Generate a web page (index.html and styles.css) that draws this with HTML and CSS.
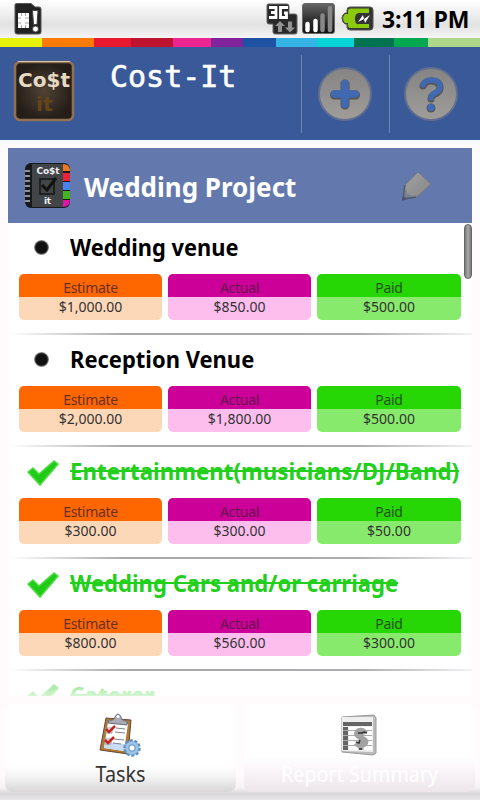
FILE: index.html
```html
<!DOCTYPE html>
<html lang="en">
<head>
<meta charset="utf-8">
<title>Cost-It</title>
<link rel="stylesheet" href="styles.css">
</head>
<body>
<div class="screen">
  <div class="status">
    <svg class="sim" width="28" height="34" viewBox="0 0 28 34"><path d="M2.500 .5H17L21 4h4q2 0 2 2v23q0 2-2 2H3q-2 0-2-2V2q0-1.500 1.500-1.500z" fill="#222" stroke="#555"/><path d="M4 10h11v15H4z" fill="#fff"/><path d="M4 15h3m4 0h4M4 20h3m4 0h4M7.500 10v3m4-3v3m-4 9v3m4-3v3" stroke="#aaa" fill="none"/><path d="M18.500 7.500h5.500l-1 14h-3.500z" fill="#fff" stroke="#444"/><circle cx="21.500" cy="26" r="3" fill="#fff" stroke="#444"/></svg>
    <svg width="33" height="33" viewBox="0 0 33 33"><path d="M2 1h19q2 0 2 2v8h6q2 0 2 2v16q0 2-2 2H9q-2 0-2-2v-8H3q-2 0-2-2V3q0-2 1-2z" fill="#292929" stroke="#666"/><path d="M3 4.500h7v10H3m2-5h5M22 4.500h-7.500v10h6v-4.500H18" fill="none" stroke="#fff" stroke-width="2.800"/><path d="M14 18l5 5h-3v6h-4v-6H9zM24 29.500l-5-5h3v-6h4v6h3z" fill="#929292"/></svg>
    <svg class="signal" width="34" height="33" viewBox="0 0 34 33"><defs><linearGradient id="sg" x2="0" y2="1"><stop stop-color="#666"/><stop offset=".5" stop-color="#333"/><stop offset="1" stop-color="#111"/></linearGradient></defs><rect x=".5" y=".5" width="32" height="30" rx="2.500" fill="url(#sg)" stroke="#666"/><path d="M5.500 27v-6m8 6v-9" stroke="#fff" stroke-width="4.500" stroke-linecap="round"/><path d="M20.500 27V12.500m7.500 14.500V5" stroke="#888" stroke-width="4.500" stroke-linecap="round"/></svg>
    <svg class="battery" width="33" height="26" viewBox="0 0 33 26"><path d="M9 1h20q3 0 3 3v17q0 3-3 3H9q-3 0-3-3v-3H4q-3-2-3-6 0-3 3-5h2V4q0-3 3-3z" fill="#333" stroke="#555"/><path d="M9 2.500h19V7H18q-4 0-4 6t4 5h10v4H9q-2 0-2-3v-2H4q-2-2-2-5 0-2 2-4h3V5q0-2.500 2-2.500z" fill="#8bc90d"/><path d="M17 16l5-7 1 4 6-4-5 8-1-4z" fill="#fff"/></svg>
    <span class="clock">3:11 PM</span>
  </div>
  <div class="stripe"></div>
  <header class="appbar">
    <svg class="logo" width="62" height="62" viewBox="0 0 62 62"><defs><radialGradient id="lg"><stop stop-color="#514335"/><stop offset="1" stop-color="#241d18"/></radialGradient></defs><rect x="2" y="2" width="58" height="58" rx="5" fill="url(#lg)" stroke="#917152" stroke-width="2.600"/><path d="M5 1.500h52" stroke="#cfc0ae"/><text x="5" y="27" textLength="52" lengthAdjust="spacingAndGlyphs" class="logo-a">Co$t</text><text x="23" y="51" textLength="17" lengthAdjust="spacingAndGlyphs" class="logo-b">it</text></svg>
    <h1>Cost-It</h1>
    <div class="action"><svg width="60" height="60" viewBox="0 0 60 60"><defs><linearGradient id="cg" x2="0" y2="1"><stop stop-color="#858483"/><stop offset="1" stop-color="#a09d99"/></linearGradient></defs><circle cx="30" cy="30" r="26" fill="url(#cg)" stroke="#626f90" stroke-width="2"/><path d="M30 20v21M19.500 31h21" stroke="#555" stroke-width="9" stroke-linecap="round"/><path d="M30 19.500v21M19.500 30h21" stroke="#4169b1" stroke-width="7.500" stroke-linecap="round"/></svg></div>
    <div class="action"><svg width="60" height="60" viewBox="0 0 60 60"><circle cx="30" cy="30" r="26" fill="url(#cg)" stroke="#626f90" stroke-width="2"/><g fill="none" stroke-linecap="round"><path d="M22 22q2-5 8-5 9 0 9 7 0 4-5 6-4 2-4 5" stroke="#555" stroke-width="7"/><path d="M22 21q2-5 8-5 9 0 9 7 0 4-5 6-4 2-4 5" stroke="#4169b1" stroke-width="5.500"/></g><circle cx="30" cy="44" r="4.500" fill="#555"/><circle cx="30" cy="43.500" r="3.700" fill="#4169b1"/></svg></div>
  </header>
  <main>
    <section class="project">
      <svg class="book" width="48" height="46" viewBox="0 0 48 46"><rect x="1" width="45" height="45" rx="6" fill="#17191b"/><path d="M39 1q7 0 7 7H39z" fill="#ee7822"/><path d="M39 10h7v8h-7z" fill="#eb2239"/><path d="M39 19h7v8h-7z" fill="#4a83ed"/><path d="M39 28h7v8h-7z" fill="#46b421"/><path d="M39 37h7q0 7-7 7z" fill="#dc16a5"/><path d="M8 1h31v43H8z" fill="#414547"/><path d="M1 8h5M1 13h5M1 18h5M1 23h5M1 28h5M1 33h5M1 38h5" stroke="#b6babd" stroke-width="1.300"/><path d="M16 16h14v15H16z" fill="none" stroke="#141414" stroke-width="1.500"/><path d="M18 22l5 5 9-12" stroke="#111" stroke-width="3" fill="none"/><text x="12.500" y="11" textLength="23" class="book-t">Co$t</text><text x="20" y="41" textLength="7" class="book-t">it</text></svg>
      <h2>Wedding Project</h2>
      <svg class="pencil" width="32" height="32" viewBox="0 0 32 32"><defs><linearGradient id="pg" x2="1" y2="1"><stop stop-color="#a3a3a3"/><stop offset="1" stop-color="#858585"/></linearGradient></defs><path d="M5 15L18 2 31 14 17 27 6 28 3 26z" fill="url(#pg)" stroke="#717783"/><path d="M6 18l1 6 7 2-8 2-2-2z" fill="#748098"/><path d="M5 15L3 29l13-2" stroke="#535b6b" fill="none" stroke-width="1.500"/><path d="M2 31l1-5 4 3z" fill="#4c5362"/></svg>
    </section>
    <div class="list">
      <article class="row"><div class="name"><i class="dot"></i><span class="t1">Wedding venue</span></div><div class="cells"><div class="cell est"><b>Estimate</b><span>$1,000.00</span></div><div class="cell act"><b>Actual</b><span>$850.00</span></div><div class="cell paid"><b>Paid</b><span>$500.00</span></div></div></article>
      <article class="row"><div class="name"><i class="dot"></i><span class="t2">Reception Venue</span></div><div class="cells"><div class="cell est"><b>Estimate</b><span>$2,000.00</span></div><div class="cell act"><b>Actual</b><span>$1,800.00</span></div><div class="cell paid"><b>Paid</b><span>$500.00</span></div></div></article>
      <article class="row done"><div class="name"><svg class="tick" width="34" height="30" viewBox="0 0 34 30"><path d="M2 14l5-4 6 6L28 3l4 3-18 21z" fill="#20cb16" stroke="#4fdb48" stroke-width="1.500"/></svg><span class="t3">Entertainment(musicians/DJ/Band)</span></div><div class="cells"><div class="cell est"><b>Estimate</b><span>$300.00</span></div><div class="cell act"><b>Actual</b><span>$300.00</span></div><div class="cell paid"><b>Paid</b><span>$50.00</span></div></div></article>
      <article class="row done"><div class="name"><svg class="tick" width="34" height="30" viewBox="0 0 34 30"><path d="M2 14l5-4 6 6L28 3l4 3-18 21z" fill="#20cb16" stroke="#4fdb48" stroke-width="1.500"/></svg><span class="t4">Wedding Cars and/or carriage</span></div><div class="cells"><div class="cell est"><b>Estimate</b><span>$800.00</span></div><div class="cell act"><b>Actual</b><span>$560.00</span></div><div class="cell paid"><b>Paid</b><span>$300.00</span></div></div></article>
      <article class="row done last"><div class="name"><svg class="tick" width="34" height="30" viewBox="0 0 34 30"><path d="M2 14l5-4 6 6L28 3l4 3-18 21z" fill="#20cb16" stroke="#4fdb48" stroke-width="1.500"/></svg><span class="t5">Caterer</span></div></article>
      <div class="fade"></div>
      <div class="scroll"></div>
    </div>
  </main>
  <nav>
    <div class="tab on">
      <svg width="44" height="44" viewBox="0 0 44 44"><path d="M8 5l25 2-3 34L2 37z" fill="#af7836" stroke="#674a35"/><path d="M10 9l20 2-4 27-20-3z" fill="#fff"/><path d="M8 29l20 2-2 7-20-3z" fill="#c9dcf5"/><path d="M11 7q5 1 6-3 3-6 6 0 0 4 6 4v4L10 10z" fill="#a9abb6" stroke="#6c6e79"/><circle cx="20" cy="3.500" r="1.500" fill="#fff"/><path d="M18 15l9 1m-10 3l10 1M16 26l10 1m-11 3l8 1" stroke="#7d8590"/><path d="M8 15h6v5H8zM7 26h6v5H7z" fill="#fff" stroke="#999"/><path d="M8 16l3 3 6-6M7 27l3 3 6-6" stroke="#c52322" stroke-width="2.500" fill="none"/><circle cx="34" cy="35" r="7.500" fill="#8fb9e3" stroke="#5d8fc2" stroke-width="2.500" stroke-dasharray="3 1.700"/><circle cx="34" cy="35" r="6.500" fill="#9bc3ea"/><circle cx="34" cy="35" r="3.200" fill="#fff" stroke="#5b88b7"/></svg>
      <span>Tasks</span>
    </div>
    <div class="tab off">
      <svg width="44" height="44" viewBox="0 0 44 44"><path d="M5 4l32-2 2 3v35l-3 2-31-3z" fill="#bbb" stroke="#999"/><path d="M5 4h31v35l-31-1z" fill="#eee"/><path d="M6 9h29v4H6zM6 14h5v23H6z" fill="#656565"/><path d="M12 14h23v23H12z" fill="#fff"/><path d="M6 17.500h29m-29 5h29m-29 5h29m-29 5h29" stroke="#aaa"/><path d="M29 20q-4-4-8-2-4 4 3 7 7 2 4 6-5 4-9-1M24 15v22" fill="none" stroke="#a2a2a2" stroke-width="5"/><path d="M21 20h4l2-1 3 1M19 29l3 1 1-3m-1 9h3" fill="none" stroke="#333" stroke-width="1.500"/></svg>
      <span>Report Summary</span>
    </div>
  </nav>
</div>
</body>
</html>
```
FILE: styles.css
```css
* { box-sizing: border-box; }
body { margin: 0; font-family: "Noto Sans", "Open Sans", sans-serif; }
.screen { width: 480px; height: 800px; overflow: hidden; background: #fffafc; display: flex; flex-direction: column; }
.status { height: 38px; flex: none; display: flex; align-items: flex-start; padding: 2px 0 0 14px; background: linear-gradient(#fff, #e3e2e3 65%, #f4f4f4); }
.status svg { flex: none; margin-top: 1px; }
.status .sim { margin-right: 224px; }
.status .signal { margin-left: 3px; }
.status .battery { margin: 4px 0 0 5px; }
.clock { margin-left: 8px; font: bold 23px/35px "Open Sans", sans-serif; letter-spacing: -0.1px; white-space: nowrap; }
.stripe { height: 9px; flex: none; background: linear-gradient(90deg, #e8f10b 42px, #f97b08 42px 94px, #e91831 94px 131px, #bf1430 131px 173px, #ed2593 173px 211px, #81239b 211px 243px, #1d51a1 243px 276px, #35b5e5 276px 317px, #08d3d6 317px 354px, #007450 354px 394px, #04a850 394px 428px, #add88b 428px); }
.appbar { height: 93px; flex: none; display: flex; padding-left: 13px; background: #3a5999; }
.logo { margin-top: 13px; }
.logo-a { font: bold 20px "DejaVu Sans", sans-serif; fill: #e6dac4; }
.logo-b { font: bold 20px "DejaVu Sans", sans-serif; fill: #634519; }
h1 { margin: 10px 0 0 35px; width: 191px; color: #fff; font: 30px/40px "DejaVu Sans Mono", monospace; -webkit-text-stroke: 0.6px #fff; }
.action { width: 88px; height: 78px; margin-top: 8px; border-left: 1px solid #6d84b4; display: flex; align-items: center; justify-content: center; padding-right: 1px; }
.action + .action { width: 82px; padding-right: 0; }
main { height: 556px; padding: 8px 8px 0; flex: none; background: linear-gradient(#effaff, #fffafc 5px); }
.project { height: 75px; display: flex; align-items: center; padding-left: 16px; background: #6379ad; }
h2 { margin: 2px 0 0 12px; width: 316px; flex: none; color: #fff; font: bold 26px/36px "Noto Sans", sans-serif; white-space: nowrap; }
.book-t { font: bold 9px "DejaVu Sans", sans-serif; fill: #f0f0f0; }
.list { height: 473px; position: relative; overflow: hidden; background: #fff; }
.row { height: 112px; background: linear-gradient(90deg, #fff, #aaa 25%, #aaaab0 75%, #f3f1f6) 0 110px / 100% 2px no-repeat; }
.name { height: 51px; display: flex; align-items: center; }
.name span { color: #000; font: bold 24px/36px "Noto Sans", sans-serif; white-space: nowrap; margin-top: -3px; transform-origin: left; }
.t1 { transform: scaleX(0.91); }
.t2 { transform: scaleX(0.915); }
.t3 { transform: scaleX(0.93); }
.t4 { transform: scaleX(0.92); }
.t5 { transform: scaleX(0.94); }
.dot { flex: none; width: 15px; height: 15px; margin: -3px 21px 0 26px; border-radius: 50%; background: radial-gradient(closest-side, #111 75%, #aaa 100%); }
.tick { flex: none; margin: 0 10px 0 18px; }
.done .name span { color: #22cf1b; text-decoration: line-through; text-decoration-thickness: 2px; }
.cells { display: grid; grid-template-columns: 143px 143px 144px; gap: 6px; padding-left: 11px; }
.cell { height: 46px; border-radius: 5px; overflow: hidden; display: grid; grid-template-rows: 23px 23px; text-align: center; font-size: 14px; color: #333; }
.cell b { font-weight: normal; line-height: 27px; letter-spacing: -0.3px; }
.cell span { line-height: 20px; }
.est { background: #fdd8b8; }
.est b { background: #fe6700; color: #683020; }
.act { background: #fdbeee; }
.act b { background: #cc0099; color: #6a164e; }
.paid { background: #87ea6c; }
.paid b { background: #27d605; color: #225517; }
.fade { position: absolute; left: 0; right: 0; bottom: 0; height: 26px; background: linear-gradient(#fff0, #ffffff80 50%, #ffffffd0); }
.scroll { position: absolute; right: 0; top: 1px; width: 8px; height: 55px; border: 1px solid #666; border-radius: 4px; background: linear-gradient(90deg, #777, #aaa, #777); }
nav { height: 104px; flex: none; padding: 8px 5px 0; display: flex; gap: 8px; background: linear-gradient(#fffafc 75%, #f6f2f5 88%, #d9d7d9 94%, #e8e6e8); }
.tab { height: 88px; width: 231px; border-radius: 8px; display: flex; flex-direction: column; align-items: center; }
.tab svg { margin: 9px 2px 0 0; flex: none; }
.tab span { font-size: 21px; line-height: 30px; margin-top: 2px; color: #333; transform: scaleX(0.94); }
.on { background: linear-gradient(#fff 70%, #f5f5f5 82%, #d8d6d7); }
.off { background: linear-gradient(#fff 60%, #faf5f9 75%, #ece6eb); }
.off span { color: #fff; }
```
